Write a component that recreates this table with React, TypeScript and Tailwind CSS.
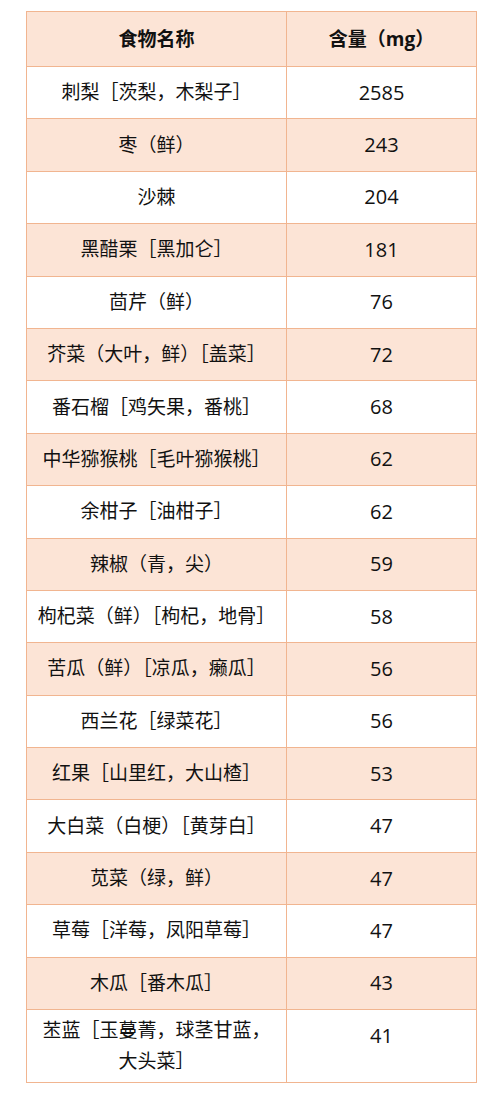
import React from "react";

const rows: [React.ReactNode, string][] = [
  ["刺梨［茨梨，木梨子］", "2585"],
  ["枣（鲜）", "243"],
  ["沙棘", "204"],
  ["黑醋栗［黑加仑］", "181"],
  ["茴芹（鲜）", "76"],
  ["芥菜（大叶，鲜）［盖菜］", "72"],
  ["番石榴［鸡矢果，番桃］", "68"],
  ["中华猕猴桃［毛叶猕猴桃］", "62"],
  ["余柑子［油柑子］", "62"],
  ["辣椒（青，尖）", "59"],
  ["枸杞菜（鲜）［枸杞，地骨］", "58"],
  ["苦瓜（鲜）［凉瓜，癞瓜］", "56"],
  ["西兰花［绿菜花］", "56"],
  ["红果［山里红，大山楂］", "53"],
  ["大白菜（白梗）［黄芽白］", "47"],
  ["苋菜（绿，鲜）", "47"],
  ["草莓［洋莓，凤阳草莓］", "47"],
  ["木瓜［番木瓜］", "43"],
  [
    <>
      苤蓝［玉蔓菁，球茎甘蓝，
      <br />
      大头菜］
    </>,
    "41",
  ],
];

export default function App() {
  return (
    <div
      className="w-[503px] h-[1096px] bg-white pt-[11px] pl-[26px]"
      style={{ fontFamily: '"Open Sans", "Noto Sans CJK SC", sans-serif' }}
    >
      <table className="w-[450px] border-collapse text-[19px] text-[#111] table-fixed">
        <colgroup>
          <col className="w-[260px]" />
          <col className="w-[190px]" />
        </colgroup>
        <thead>
          <tr className="h-[55px] bg-[#fce4d6]">
            <th className="border border-[#f1b590] font-bold">食物名称</th>
            <th className="border border-[#f1b590] font-bold">含量（mg）</th>
          </tr>
        </thead>
        <tbody>
          {rows.map(([name, val], i) => {
            const last = i === rows.length - 1;
            return (
              <tr
                key={i}
                className={
                  (i % 2 === 1 ? "bg-[#fce4d6] " : "bg-white ") +
                  (last ? "h-[73px]" : "h-[52.4px]")
                }
              >
                <td className="border border-[#f1b590] text-center leading-[31px] px-1">
                  {name}
                </td>
                <td
                  className={
                    "border border-[#f1b590] text-center text-[20px] " +
                    (last ? "align-top pt-[11px] leading-[30px]" : "")
                  }
                >
                  {val}
                </td>
              </tr>
            );
          })}
        </tbody>
      </table>
    </div>
  );
}
